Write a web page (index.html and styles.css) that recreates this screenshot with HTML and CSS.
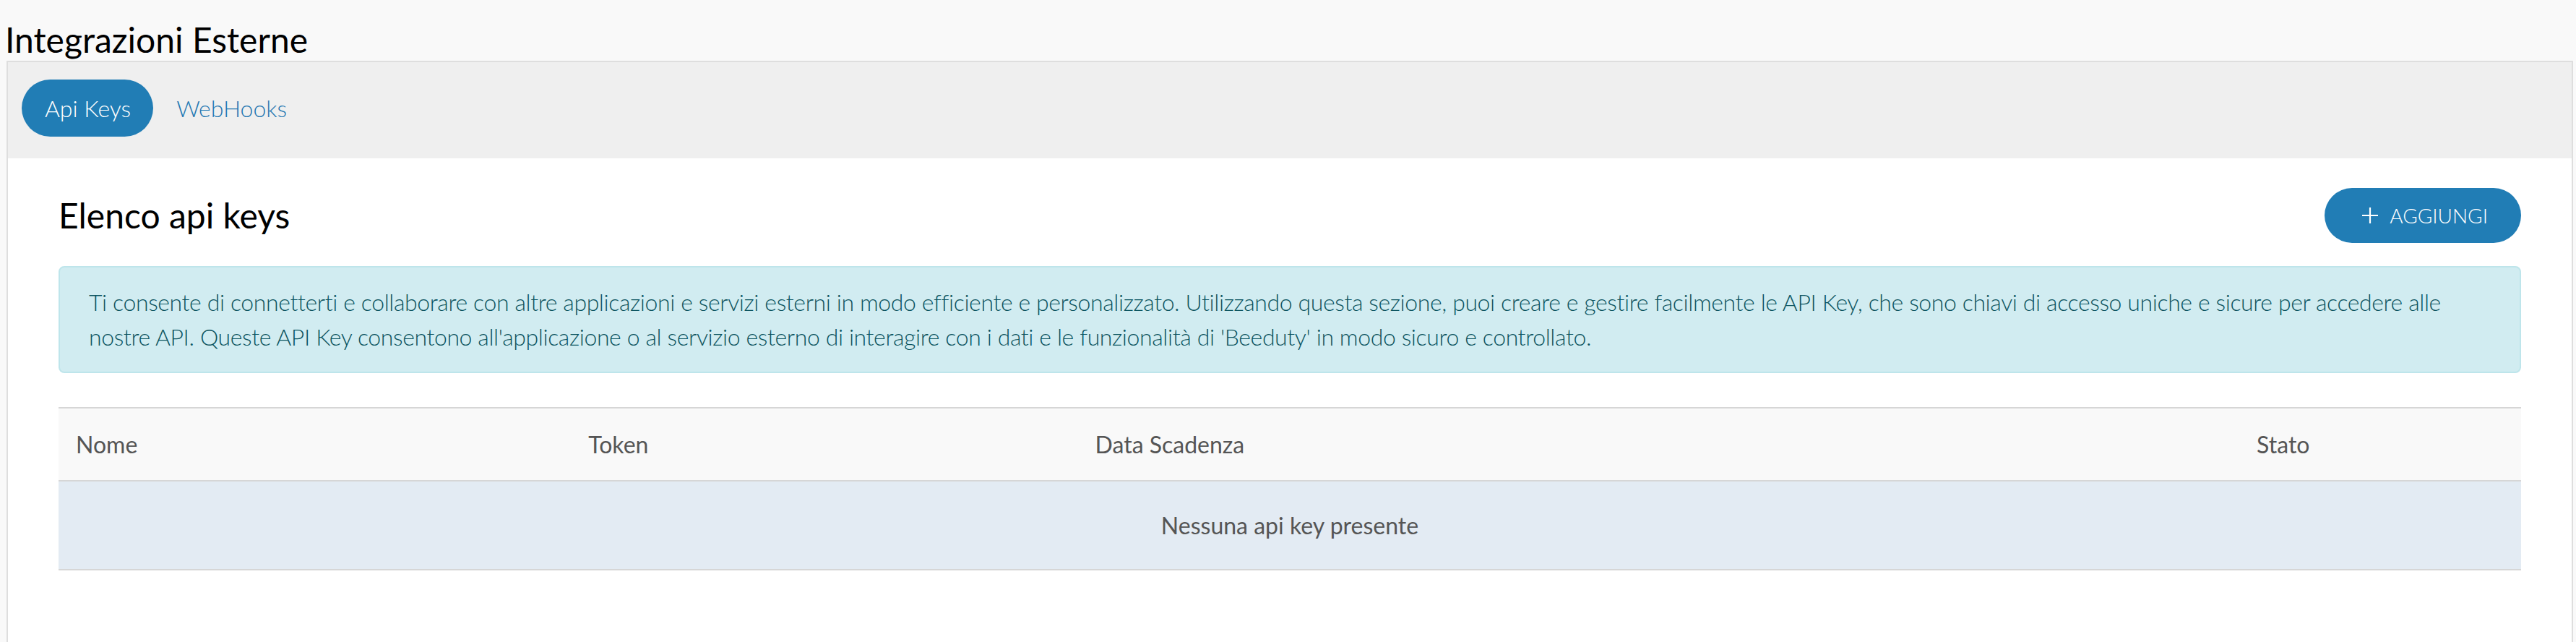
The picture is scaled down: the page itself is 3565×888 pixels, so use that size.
FILE: index.html
```html
<!DOCTYPE html>
<html lang="it">
<head>
  <meta charset="UTF-8">
  <meta name="viewport" content="width=device-width, initial-scale=1.0">
  <title>Integrazioni Esterne</title>
  <link rel="stylesheet" href="styles.css">
</head>
<body>
  <div class="page">
    <h1 class="page-title">Integrazioni Esterne</h1>

    <div class="card">
      <div class="card-header">
        <nav class="tabs">
          <a class="tab active" href="#">Api Keys</a>
          <a class="tab" href="#">WebHooks</a>
        </nav>
      </div>

      <div class="card-body">
        <div class="section-head">
          <h2>Elenco api keys</h2>
          <button class="btn-add" type="button">
            <svg width="22" height="22" viewBox="0 0 22 22" aria-hidden="true">
              <path d="M11 0v22M0 11h22" stroke="#fff" stroke-width="2.2" fill="none"/>
            </svg>
            AGGIUNGI
          </button>
        </div>

        <div class="alert-info">
          Ti consente di connetterti e collaborare con altre applicazioni e servizi esterni in modo efficiente e personalizzato. Utilizzando questa sezione, puoi creare e gestire facilmente le API Key, che sono chiavi di accesso uniche e sicure per accedere alle nostre API. Queste API Key consentono all'applicazione o al servizio esterno di interagire con i dati e le funzionalità di 'Beeduty' in modo sicuro e controllato.
        </div>

        <table class="keys-table">
          <colgroup>
            <col class="col-name">
            <col class="col-token">
            <col class="col-date">
            <col class="col-state">
          </colgroup>
          <thead>
            <tr>
              <th>Nome</th>
              <th>Token</th>
              <th>Data Scadenza</th>
              <th>Stato</th>
            </tr>
          </thead>
          <tbody>
            <tr class="empty">
              <td colspan="4">Nessuna api key presente</td>
            </tr>
          </tbody>
        </table>
      </div>
    </div>
  </div>
</body>
</html>
```

FILE: styles.css
```css
body {
  margin: 0;
  background: #f9f9f9;
  font-family: Lato, "Open Sans", sans-serif;
  color: #000;
}
.page {
  padding: 26px 4px 0 9px;
}
.page-title {
  margin: 0 0 0 -2px;
  font-size: 48px;
  font-weight: 400;
  line-height: 1.2;
}
.card {
  background: #fff;
  border: 2px solid #dedede;
  min-height: 900px;
}
.card-header {
  background: #efefef;
  padding: 24px 20px 30px 19px;
}
.tabs {
  display: flex;
}
.tab {
  padding: 16px 31px 15px 32px;
  font-size: 32px;
  font-weight: 300;
  line-height: 48px;
  color: #1f77b2;
  text-decoration: none;
  border-radius: 40px;
}
.tab.active {
  background: #217db5;
  color: #fff;
}
.card-body {
  padding: 41px 70px 0;
}
.section-head {
  display: flex;
  justify-content: space-between;
  align-items: center;
}
.section-head h2 {
  margin: 0;
  font-size: 48px;
  font-weight: 400;
  line-height: 1.2;
}
.btn-add {
  display: flex;
  align-items: center;
  gap: 16px;
  height: 76px;
  padding: 0 46px 0 52px;
  border: none;
  border-radius: 40px;
  background: #217db5;
  color: #fff;
  font-family: inherit;
  font-size: 28px;
  font-weight: 300;
}
.alert-info {
  margin: 32px 0 47px;
  padding: 24px 40px;
  background: #d1ecf1;
  border: 2px solid #bee5eb;
  border-radius: 8px;
  color: #0c5460;
  font-size: 32px;
  line-height: 48px;
  font-weight: 300;
  letter-spacing: -0.4px;
}
.keys-table {
  width: 100%;
  border-collapse: collapse;
  table-layout: fixed;
  font-size: 32px;
  line-height: 48px;
  color: #555;
}
.col-name { width: 20.81%; }
.col-token { width: 20.58%; }
.col-date { width: 47.17%; }
.col-state { width: 11.44%; }
.keys-table th {
  text-align: left;
  font-weight: 400;
  padding: 26px 24px 25px;
  background: #f9f9f9;
  border-top: 2px solid #d6d6d6;
  border-bottom: 2px solid #d6d6d6;
}
.keys-table td {
  padding: 37px 24px 36px;
  background: #e3ebf3;
  border-bottom: 2px solid #d6d6d6;
}
.keys-table .empty td {
  text-align: center;
}
```
